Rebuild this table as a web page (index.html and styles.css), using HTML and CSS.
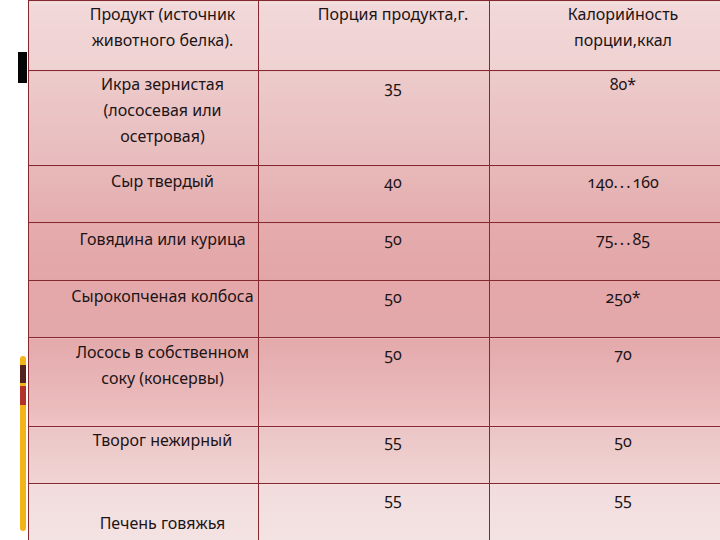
FILE: index.html
```html
<!DOCTYPE html>
<html lang="ru">
<head>
<meta charset="utf-8">
<title>Калорийность</title>
<link rel="stylesheet" href="styles.css">
</head>
<body>
<div class="page">
  <div class="rail">
    <div class="mark-black"></div>
    <div class="mark-yellow">
      <div class="seg seg-dark"></div>
      <div class="seg seg-red"></div>
    </div>
  </div>
  <table class="table">
    <colgroup>
      <col class="c1"><col class="c2"><col class="c3">
    </colgroup>
    <tr class="r-head">
      <td>Продукт (источник<br>животного белка).</td>
      <td>Порция продукта,г.</td>
      <td>Калорийность<br>порции,ккал</td>
    </tr>
    <tr class="r-ikra">
      <td>Икра зернистая<br>(лососевая или<br>осетровая)</td>
      <td class="num">35</td>
      <td class="num num-up">80*</td>
    </tr>
    <tr class="r-syr">
      <td>Сыр твердый</td>
      <td class="num">40</td>
      <td class="num">140<span class="dots">...</span>160</td>
    </tr>
    <tr class="r-gov">
      <td>Говядина или курица</td>
      <td class="num">50</td>
      <td class="num">75<span class="dots">...</span>85</td>
    </tr>
    <tr class="r-kolb">
      <td>Сырокопченая колбоса</td>
      <td class="num">50</td>
      <td class="num">250*</td>
    </tr>
    <tr class="r-los">
      <td>Лосось в собственном<br>соку (консервы)</td>
      <td class="num">50</td>
      <td class="num">70</td>
    </tr>
    <tr class="r-tvo">
      <td>Творог нежирный</td>
      <td class="num">55</td>
      <td class="num">50</td>
    </tr>
    <tr class="r-pech">
      <td><br>Печень говяжья</td>
      <td class="num">55</td>
      <td class="num">55</td>
    </tr>
  </table>
</div>
</body>
</html>
```
FILE: styles.css
```css
html, body {
  margin: 0;
  padding: 0;
  background: #ffffff;
  overflow: hidden;
}
.page {
  display: flex;
  width: 720px;
  height: 540px;
  overflow: hidden;
  font-family: "Noto Sans", "Open Sans", sans-serif;
  color: #1c1416;
}
.rail {
  flex: 0 0 28px;
  display: flex;
  flex-direction: column;
  padding-left: 18px;
  box-sizing: border-box;
}
.mark-black {
  width: 9px;
  height: 31px;
  margin-top: 52px;
  background: #050505;
}
.mark-yellow {
  width: 6px;
  height: 175px;
  margin-top: 273px;
  margin-left: 2px;
  border-radius: 3px;
  background: #f2b418;
  padding-top: 9px;
  box-sizing: border-box;
}
.seg { width: 6px; }
.seg-dark { height: 18px; background: #54231f; margin-bottom: 3px; }
.seg-red { height: 19px; background: #b3332b; }

.table {
  border-collapse: collapse;
  table-layout: fixed;
  width: 730px;
  flex: 0 0 auto;
  font-size: 16px;
  line-height: 26px;
}
.c1 { width: 230px; }
.c2 { width: 231px; }
.c3 { width: 269px; }
.table td {
  border: 1px solid #86282f;
  text-align: center;
  vertical-align: top;
  padding: 0 2px 0 40px;
  box-sizing: border-box;
  white-space: nowrap;
}
.table td.num { font-variant-numeric: oldstyle-nums; padding-top: 3px; }
.table td.num-up { padding-top: 0; }
.table td:nth-child(3) { padding-right: 42px; }
.dots { letter-spacing: 2px; }

.r-head td { height: 70px; padding-top: 0; background: linear-gradient(#f3e3de 0, #f2d8d9 6%, #efd1d1 100%); }
.r-ikra td { height: 95px; background: linear-gradient(#edcbcb, #e8bbbd); }
.r-syr td { height: 57px; padding-top: 2px; background: linear-gradient(#e8b9b9, #e4adaf); }
.r-gov td { height: 58px; padding-top: 3px; background: linear-gradient(#e5abad, #e3a6a8); }
.r-kolb td { height: 57px; padding-top: 2px; background: linear-gradient(#e4a8aa, #e3a8aa); }
.r-los td { height: 89px; padding-top: 1px; background: linear-gradient(#e3a9ab, #ecbdbe 85%, #f4c4c6 100%); }
.r-tvo td { height: 57px; padding-top: 0; background: linear-gradient(#ebc5c5, #f1d4d4); }
.r-tvo td.num { padding-top: 1px; }
.r-pech td { height: 90px; padding-top: 0; background: linear-gradient(#f2dcdd, #f5e7e7); }
.r-pech td.num { padding-top: 2px; }
```
